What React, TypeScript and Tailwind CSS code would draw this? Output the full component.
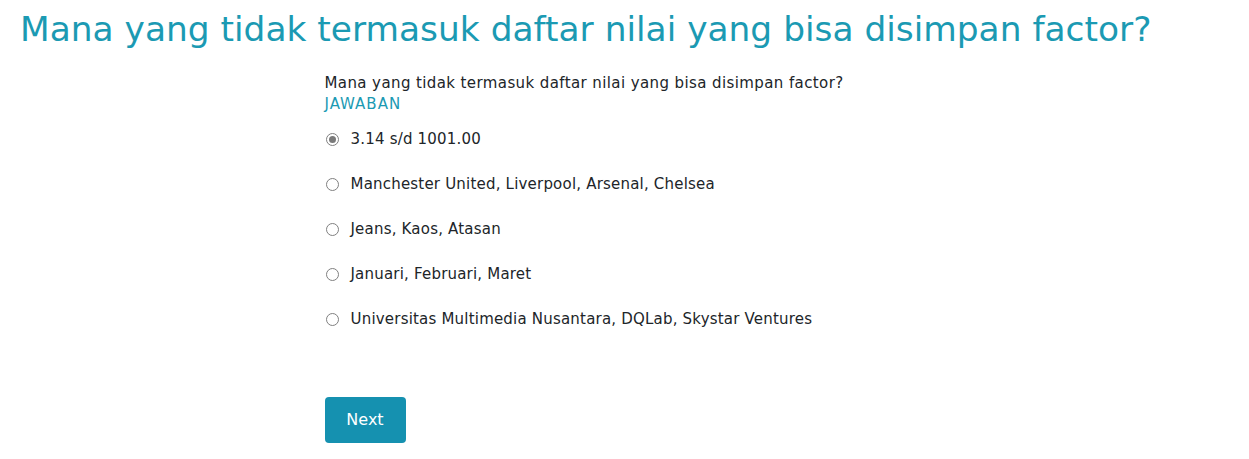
const options = [
  "3.14 s/d 1001.00",
  "Manchester United, Liverpool, Arsenal, Chelsea",
  "Jeans, Kaos, Atasan",
  "Januari, Februari, Maret",
  "Universitas Multimedia Nusantara, DQLab, Skystar Ventures",
];

export default function App() {
  return (
    <div className="min-h-screen bg-white font-['DejaVu_Sans',sans-serif] text-[#212529]">
      <h1 className="px-5 pt-[5px] text-[34.4px] leading-[48px] text-[#1b9ab3]">
        Mana yang tidak termasuk daftar nilai yang bisa disimpan factor?
      </h1>

      <div className="mx-auto mt-[20px] w-[600px]">
        <p className="text-[15px] leading-[21px] tracking-[0.4px]">Mana yang tidak termasuk daftar nilai yang bisa disimpan factor?</p>
        <p className="text-[15px] leading-[20px] tracking-[1px] text-[#1b9ab3]">JAWABAN</p>

        <div className="mt-[13px] flex flex-col">
          {options.map((opt, i) => (
            <div key={opt} className="flex h-[45px] items-start gap-[12px] pt-[1px] text-[15px] leading-[22px] tracking-[0.2px]">
              <span className="mt-[5px] ml-[1px] flex h-[13px] w-[13px] shrink-0 items-center justify-center rounded-full border border-[#808080] bg-white">
                {i === 0 && <span className="h-[7px] w-[7px] rounded-full bg-[#7a7a7a]" />}
              </span>
              <span>{opt}</span>
            </div>
          ))}
        </div>

        <button className="mt-[45px] h-[46px] w-[81px] rounded-[4px] bg-[#1591b0] text-[16px] text-white">
          Next
        </button>
      </div>
    </div>
  );
}
